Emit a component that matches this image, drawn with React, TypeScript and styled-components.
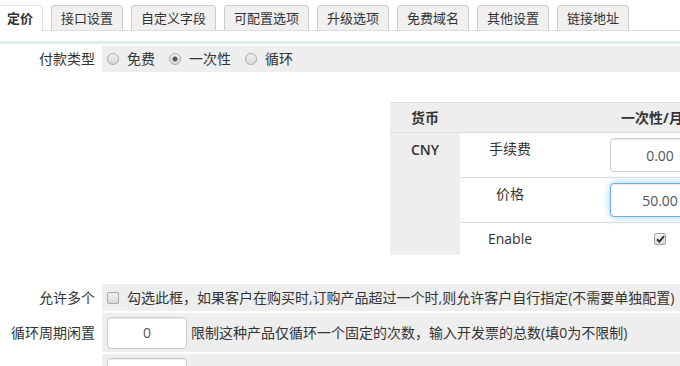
import styled, { createGlobalStyle } from 'styled-components';

const GlobalStyle = createGlobalStyle`
  html, body {
    margin: 0;
    padding: 0;
    background: #fff;
    overflow: hidden;
  }
  body {
    font-family: "Open Sans", "Noto Sans CJK SC", sans-serif;
    font-size: 14px;
    line-height: 20px;
    color: #333;
  }
`;

const TABS = ['定价', '接口设置', '自定义字段', '可配置选项', '升级选项', '免费域名', '其他设置', '链接地址'];

const PAY_TYPES = [
  { label: '免费', checked: false },
  { label: '一次性', checked: true },
  { label: '循环', checked: false },
];

const Page = styled.div`
  width: 680px;
  overflow: hidden;
`;

const TabBar = styled.ul`
  display: flex;
  gap: 8px;
  height: 25px;
  margin: 0 0 0 -3px;
  padding: 5px 0 0;
  list-style: none;
  border-bottom: 1px solid #ddd;
`;

const Tab = styled.li<{ $active?: boolean }>`
  flex: none;
  box-sizing: border-box;
  height: ${p => (p.$active ? '26px' : '25px')};
  padding: 0 9px;
  border: 1px solid ${p => (p.$active ? '#ddd' : '#ccc')};
  border-bottom: 0;
  border-radius: 4px 4px 0 0;
  background: ${p => (p.$active ? '#fff' : '#f0f0f0')};
  font-size: 13px;
  line-height: 24px;
  font-weight: ${p => (p.$active ? 700 : 400)};
  white-space: nowrap;
`;

const Divider = styled.div`
  height: 3px;
  margin: 10px 0 2px;
  background: #dcefef;
`;

const Row = styled.div<{ $h?: number }>`
  display: flex;
  min-height: ${p => p.$h ?? 26}px;
  margin-bottom: 2px;
`;

const Label = styled.div`
  flex: none;
  width: 102px;
  box-sizing: border-box;
  padding-right: 7px;
  display: flex;
  align-items: center;
  justify-content: flex-end;
  white-space: nowrap;
`;

const Field = styled.div`
  flex: 1;
  min-width: 0;
  display: flex;
  align-items: center;
  padding: 0 5px;
  background: #eee;
  white-space: nowrap;
`;

const PriceField = styled.div`
  flex: 1;
  min-width: 0;
  padding: 28px 0 27px 288px;
`;

const Option = styled.span`
  display: inline-flex;
  align-items: center;
  gap: 8px;
  margin-right: 14px;
`;

const Radio = styled.span<{ $checked?: boolean }>`
  flex: none;
  width: 12px;
  height: 12px;
  box-sizing: border-box;
  border: 1px solid #a9a9a9;
  border-radius: 50%;
  background: ${p =>
    p.$checked
      ? 'radial-gradient(circle, #555 0 2.2px, transparent 2.8px), linear-gradient(#f0f0f0, #d8d8d8)'
      : 'linear-gradient(#f0f0f0, #d8d8d8)'};
`;

const CheckBox = styled.span<{ $center?: boolean }>`
  flex: none;
  width: 12px;
  height: 12px;
  box-sizing: border-box;
  border: 1px solid #a6a6a6;
  border-radius: 2px;
  background: linear-gradient(#f4f4f4, #d9d9d9);
  display: flex;
  align-items: center;
  justify-content: center;
  margin: ${p => (p.$center ? '0 auto' : '0 8px 0 0')};
`;

const TextInput = styled.input<{ $w: number; $h: number; $focused?: boolean; $center?: boolean }>`
  display: block;
  flex: none;
  box-sizing: border-box;
  width: ${p => p.$w}px;
  height: ${p => p.$h}px;
  margin: ${p => (p.$center ? '0 auto' : '0')};
  padding: 0 12px;
  border: 1px solid ${p => (p.$focused ? '#66afe9' : '#ccc')};
  border-radius: 4px;
  background: #fff;
  color: #555;
  font: inherit;
  text-align: center;
  outline: none;
  box-shadow: ${p =>
    p.$focused
      ? 'inset 0 1px 1px rgba(0,0,0,.075), 0 0 8px rgba(102,175,233,.6)'
      : 'inset 0 1px 1px rgba(0,0,0,.075)'};
`;

const Hint = styled.span`
  margin-left: 4px;
`;

const PriceTable = styled.table`
  border-collapse: collapse;
  table-layout: fixed;
  width: 370px;
`;

const Col = styled.col<{ $w: number }>`
  width: ${p => p.$w}px;
`;

const HeadCell = styled.th<{ $align?: 'left' | 'center' }>`
  height: 29px;
  padding: ${p => (p.$align === 'left' ? '0 0 0 21px' : '0 2px 0 0')};
  background: #eee;
  border-top: 1px solid #ddd;
  border-bottom: 1px solid #ddd;
  font-weight: 700;
  text-align: ${p => p.$align ?? 'center'};
  white-space: nowrap;
`;

const CurrencyCell = styled.td`
  padding: 7px 0 0 21px;
  vertical-align: top;
  background: #eee;
  font-weight: 600;
`;

const NameCell = styled.td<{ $divided?: boolean; $middle?: boolean }>`
  padding: ${p => (p.$middle ? '0' : '6px 0 0')};
  vertical-align: ${p => (p.$middle ? 'middle' : 'top')};
  text-align: center;
  border-top: ${p => (p.$divided ? '1px solid #ddd' : '0')};
`;

const ValueCell = styled.td<{ $divided?: boolean; $pad?: number }>`
  padding: ${p => p.$pad ?? 5}px 0;
  border-top: ${p => (p.$divided ? '1px solid #ddd' : '0')};
`;

const Tick = () => (
  <svg width="9" height="8" viewBox="0 0 9 8">
    <path d="M1 4.3 L3.4 6.6 L8 1.2" fill="none" stroke="#2b2b2b" strokeWidth="1.9" />
  </svg>
);

export default function App() {
  return (
    <Page>
      <GlobalStyle />
      <TabBar>
        {TABS.map((t, i) => (
          <Tab key={t} $active={i === 0}>
            {t}
          </Tab>
        ))}
      </TabBar>
      <Divider />

      <Row $h={26}>
        <Label>付款类型</Label>
        <Field>
          {PAY_TYPES.map(o => (
            <Option key={o.label}>
              <Radio $checked={o.checked} />
              {o.label}
            </Option>
          ))}
        </Field>
      </Row>

      <Row>
        <Label />
        <PriceField>
          <PriceTable>
            <colgroup>
              <Col $w={70} />
              <Col $w={100} />
              <Col $w={200} />
            </colgroup>
            <thead>
              <tr>
                <HeadCell $align="left">货币</HeadCell>
                <HeadCell />
                <HeadCell>一次性/月付</HeadCell>
              </tr>
            </thead>
            <tbody>
              <tr>
                <CurrencyCell rowSpan={3}>CNY</CurrencyCell>
                <NameCell>手续费</NameCell>
                <ValueCell>
                  <TextInput $w={100} $h={34} $center value="0.00" readOnly />
                </ValueCell>
              </tr>
              <tr>
                <NameCell $divided>价格</NameCell>
                <ValueCell $divided>
                  <TextInput $w={100} $h={34} $center $focused value="50.00" readOnly />
                </ValueCell>
              </tr>
              <tr>
                <NameCell $divided $middle>
                  Enable
                </NameCell>
                <ValueCell $divided $pad={10}>
                  <CheckBox $center>
                    <Tick />
                  </CheckBox>
                </ValueCell>
              </tr>
            </tbody>
          </PriceTable>
        </PriceField>
      </Row>

      <Row $h={27}>
        <Label>允许多个</Label>
        <Field>
          <CheckBox />
          勾选此框，如果客户在购买时,订购产品超过一个时,则允许客户自行指定(不需要单独配置)
        </Field>
      </Row>

      <Row $h={39}>
        <Label>循环周期闲置</Label>
        <Field>
          <TextInput $w={80} $h={32} value="0" readOnly />
          <Hint>限制这种产品仅循环一个固定的次数，输入开发票的总数(填0为不限制)</Hint>
        </Field>
      </Row>

      <Row $h={40}>
        <Label />
        <Field>
          <TextInput $w={80} $h={32} value="0" readOnly />
        </Field>
      </Row>
    </Page>
  );
}
